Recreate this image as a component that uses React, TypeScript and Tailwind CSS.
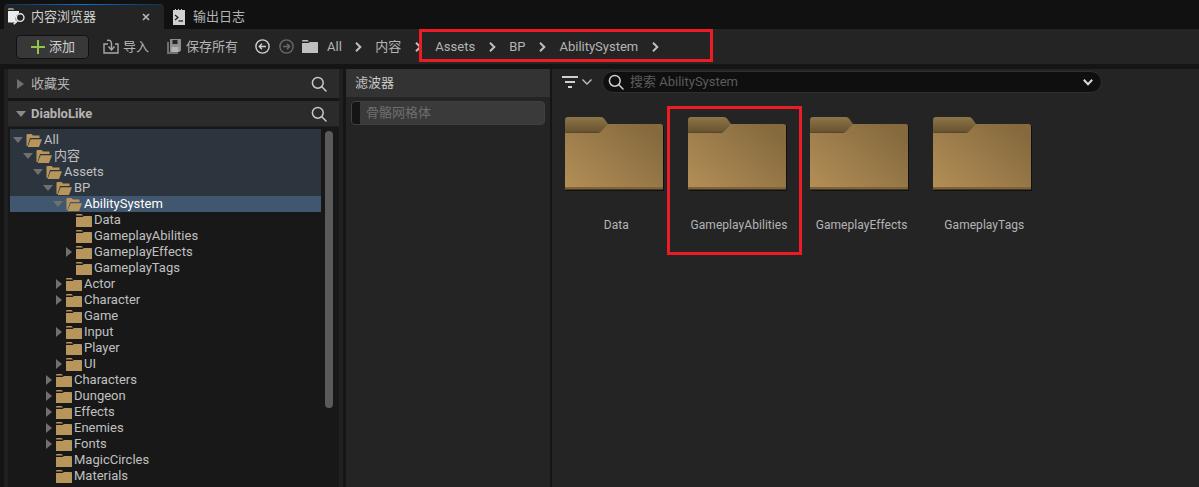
import React from "react";

const FONT = "font-['Roboto','Noto_Sans_CJK_SC',sans-serif]";

function Search({ className = "" }: { className?: string }) {
  return (
    <svg width="16" height="16" viewBox="0 0 16 16" fill="none" stroke="currentColor" strokeWidth="1.5" className={className}>
      <circle cx="6.8" cy="6.8" r="5.4" />
      <path d="M10.8 10.8 15 15" strokeLinecap="round" />
    </svg>
  );
}

function Chevron() {
  return (
    <svg width="7" height="10" viewBox="0 0 7 10" fill="none" stroke="#c0c0c0" strokeWidth="2" className="shrink-0">
      <path d="M1 0.8 5.3 5 1 9.2" />
    </svg>
  );
}

function ClosedFolder() {
  return (
    <svg width="16" height="13" viewBox="0 0 16 13" className="shrink-0">
      <path d="M0 1.2Q0 0 1 0H5.5L7 1.6H0Z" fill="#b8955a" />
      <path d="M0 3H6.5L8 2H15.2Q16 2 16 2.8V13H0Z" fill="#b8955a" />
    </svg>
  );
}

function OpenFolder() {
  return (
    <svg width="16" height="13" viewBox="0 0 16 13" className="shrink-0">
      <path d="M0.5 12V1Q0.5 0 1.5 0H5.5L7 1.6H13.5V4H4L1.5 12Z" fill="#b8955a" />
      <path d="M4.6 5.2H16L13 13H1.6Z" fill="#b8955a" />
    </svg>
  );
}

function TreeArrow({ kind }: { kind: "open" | "closed" | "none" }) {
  if (kind === "none") return <span className="w-[10px] shrink-0" />;
  if (kind === "open")
    return (
      <svg width="10" height="6" viewBox="0 0 10 6" className="shrink-0">
        <path d="M0 0H10L5 6Z" fill="#707070" />
      </svg>
    );
  return (
    <span className="w-[10px] shrink-0 flex justify-end pr-[1px]">
      <svg width="6" height="10" viewBox="0 0 6 10">
        <path d="M0 0 6 5 0 10Z" fill="#707070" />
      </svg>
    </span>
  );
}

type Row = { label: string; depth: number; arrow: "open" | "closed" | "none"; tint?: boolean; selected?: boolean };

const rows: Row[] = [
  { label: "All", depth: 0, arrow: "open", tint: true },
  { label: "内容", depth: 1, arrow: "open", tint: true },
  { label: "Assets", depth: 2, arrow: "open", tint: true },
  { label: "BP", depth: 3, arrow: "open", tint: true },
  { label: "AbilitySystem", depth: 4, arrow: "open", selected: true },
  { label: "Data", depth: 5, arrow: "none" },
  { label: "GameplayAbilities", depth: 5, arrow: "none" },
  { label: "GameplayEffects", depth: 5, arrow: "closed" },
  { label: "GameplayTags", depth: 5, arrow: "none" },
  { label: "Actor", depth: 4, arrow: "closed" },
  { label: "Character", depth: 4, arrow: "closed" },
  { label: "Game", depth: 4, arrow: "none" },
  { label: "Input", depth: 4, arrow: "closed" },
  { label: "Player", depth: 4, arrow: "none" },
  { label: "UI", depth: 4, arrow: "closed" },
  { label: "Characters", depth: 3, arrow: "closed" },
  { label: "Dungeon", depth: 3, arrow: "closed" },
  { label: "Effects", depth: 3, arrow: "closed" },
  { label: "Enemies", depth: 3, arrow: "closed" },
  { label: "Fonts", depth: 3, arrow: "closed" },
  { label: "MagicCircles", depth: 3, arrow: "none" },
  { label: "Materials", depth: 3, arrow: "none" },
];

function TreeRow({ row }: { row: Row }) {
  const open = row.arrow === "open";
  return (
    <div
      className={`h-[16px] flex items-center text-[13px] leading-[16px] ${
        row.selected ? "bg-[#41566f] text-white" : row.tint ? "bg-[#2c343d] text-[#c0c0c0]" : "text-[#c0c0c0]"
      }`}
      style={{ paddingLeft: 3 + row.depth * 10 }}
    >
      <TreeArrow kind={row.arrow} />
      <span className="w-[3px] shrink-0" />
      {open ? <OpenFolder /> : <ClosedFolder />}
      <span className="ml-[2px] whitespace-nowrap">{row.label}</span>
    </div>
  );
}

function BigFolder({ id }: { id: string }) {
  return (
    <svg width="102" height="78" viewBox="0 0 102 78" className="block">
      <defs>
        <linearGradient id={`body-${id}`} x1="0" y1="1" x2="1" y2="0.25">
          <stop offset="0" stopColor="#b48f57" />
          <stop offset="1" stopColor="#856a3e" />
        </linearGradient>
        <linearGradient id={`tab-${id}`} x1="0" y1="0" x2="0" y2="1">
          <stop offset="0" stopColor="#8f7549" />
          <stop offset="1" stopColor="#67532f" />
        </linearGradient>
      </defs>
      <path d="M2 10H100V75H2Z" fill="#111111" />
      <path d="M1 16V4Q1 1 4 1H37Q39 1 40 2.5L44 8V16Z" fill={`url(#tab-${id})`} />
      <path d="M1 16.5H34Q36 16.5 37 15.5L44 8H96.5Q99 8 99 10.5V73H1Z" fill={`url(#body-${id})`} />
      <path d="M1 71H99V73.5H1Z" fill="#7d6339" />
    </svg>
  );
}

function ContentItem({ id, label }: { id: string; label: string }) {
  return (
    <div className="w-[122.67px] shrink-0 flex flex-col items-center">
      <div className="w-full pl-[12px]">
        <BigFolder id={id} />
      </div>
      <div className="mt-[23px] pl-[6px] text-[12px] leading-[16px] tracking-[0.05px] text-[#b4b4b4] whitespace-nowrap">{label}</div>
    </div>
  );
}

export default function App() {
  return (
    <div className={`relative w-[1199px] h-[487px] overflow-hidden flex flex-col bg-[#151515] ${FONT}`}>
      {/* Tab bar */}
      <div className="h-[29px] shrink-0 flex items-end bg-[#111111] pl-[4px]">
        <div className="relative w-[160px] h-[25px] rounded-t-[4px] bg-[#242424] flex items-center pl-[4px] pr-[14px] text-[13px] text-[#d0d0d0]">
          <div className="absolute left-[2px] right-[2px] top-0 h-[1px] bg-gradient-to-r from-[#0a3460] via-[#0f6fd0] to-[#0a3460]" />
          <svg width="18" height="17" viewBox="0 0 18 17" className="shrink-0 -mt-[1px]">
            <path d="M0 1Q0 0 1 0H5L6.5 2H0Z" fill="#8c8c8c" />
            <path d="M0 3H11V5Q7.5 7 7.6 11Q7.7 13 9 14.5H0Z" fill="#ececec" />
            <circle cx="12.2" cy="9.6" r="3.8" fill="none" stroke="#e8e8e8" strokeWidth="1.4" />
            <path d="M9.4 12.6 5.8 16.2" stroke="#e8e8e8" strokeWidth="1.6" />
          </svg>
          <span className="ml-[5px]">内容浏览器</span>
          <svg width="8" height="8" viewBox="0 0 8 8" className="ml-auto" stroke="#b8b8b8" strokeWidth="1.6">
            <path d="M1 1 7 7M7 1 1 7" />
          </svg>
        </div>
        <div className="h-[25px] flex items-center pl-[9px] text-[13px] text-[#b4b4b4]">
          <svg width="12" height="16" viewBox="0 0 12 16" className="shrink-0">
            <path d="M0 1H2V0H3V1H5V0H6V1H8V0H9V1H12V16H0Z" fill="#d0d0d0" />
            <path d="M2 6 5 8.5 2 11" fill="none" stroke="#151515" strokeWidth="1.2" />
            <path d="M5.5 12H10" stroke="#151515" strokeWidth="1.2" />
          </svg>
          <span className="ml-[8px]">输出日志</span>
        </div>
      </div>

      {/* Toolbar */}
      <div className="h-[35px] shrink-0 bg-[#242424] flex items-center pl-[16px] text-[13px] text-[#b4b4b4] whitespace-nowrap">
        <button className="w-[73px] h-[24px] rounded-[4px] border border-[#111111] bg-[#383838] flex items-center pl-[14px] text-[#d0d0d0]">
          <svg width="14" height="14" viewBox="0 0 14 14" className="shrink-0" fill="#8fc64a">
            <path d="M6 0H8V6H14V8H8V14H6V8H0V6H6Z" />
          </svg>
          <span className="ml-[4px]">添加</span>
        </button>
        <svg width="16" height="15" viewBox="0 0 16 15" className="ml-[14px] shrink-0" fill="none" stroke="#a8a8a8" strokeWidth="1.4">
          <path d="M5 5H1V14H15V5H12" />
          <path d="M4 1.5C7 0.5 8.5 2 8.5 5V10" />
          <path d="M5.5 7.5 8.5 11 11.5 7.5" />
        </svg>
        <span className="ml-[4px]">导入</span>
        <svg width="14" height="15" viewBox="0 0 14 15" className="ml-[18px] shrink-0">
          <path d="M3 0H14V11.5L12.5 13H3Z" fill="#8e8e8e" />
          <path d="M0 3H2V13H11V15H0Z" fill="#6e6e6e" />
          <path d="M5.5 1H10.5V5H5.5Z" fill="#242424" />
          <path d="M4.5 8H11.5V13H4.5Z" fill="#b4b4b4" />
        </svg>
        <span className="ml-[5px]">保存所有</span>
        <svg width="15" height="15" viewBox="0 0 15 15" className="ml-[17px] shrink-0" fill="none" stroke="#d0d0d0" strokeWidth="1.4">
          <circle cx="7.5" cy="7.5" r="6.6" />
          <path d="M11 7.5H4.5M7 4.8 4.3 7.5 7 10.2" />
        </svg>
        <svg width="15" height="15" viewBox="0 0 15 15" className="ml-[9px] shrink-0" fill="none" stroke="#6a6a6a" strokeWidth="1.4">
          <circle cx="7.5" cy="7.5" r="6.6" />
          <path d="M4 7.5H10.5M8 4.8 10.7 7.5 8 10.2" />
        </svg>
        <svg width="16" height="13" viewBox="0 0 16 13" className="ml-[8px] shrink-0" fill="#c0c0c0">
          <path d="M0 1.2Q0 0 1 0H5.5L7 1.6H0Z" />
          <path d="M0 3H6.5L8 2H15.2Q16 2 16 2.8V13H0Z" />
        </svg>
        <span className="ml-[9px] mr-[13px]">All</span>
        <div className="flex items-center gap-[13.5px]">
          <Chevron />
          <span>内容</span>
          <Chevron />
          <span>Assets</span>
          <Chevron />
          <span>BP</span>
          <Chevron />
          <span>AbilitySystem</span>
          <Chevron />
        </div>
      </div>

      {/* Main */}
      <div className="flex-1 min-h-0 flex pt-[5px] pl-[4px]">
        {/* Left column */}
        <div className="w-[339px] shrink-0 flex flex-col bg-[#202020] px-[4px]">
          <div className="h-[29px] shrink-0 bg-[#2b2b2b] flex items-center pl-[9px] pr-[12px] text-[13px] text-[#b4b4b4]">
            <svg width="7" height="10" viewBox="0 0 7 10" className="shrink-0">
              <path d="M0 0 7 5 0 10Z" fill="#707070" />
            </svg>
            <span className="ml-[7px]">收藏夹</span>
            <Search className="ml-auto text-[#c8c8c8]" />
          </div>
          <div className="h-[3px] shrink-0 bg-[#151515]" />
          <div className="h-[25px] shrink-0 bg-[#2b2b2b] flex items-center pt-[1px] pl-[8px] pr-[12px] text-[13px] font-bold text-[#b4b4b4]">
            <svg width="10" height="6" viewBox="0 0 10 6" className="shrink-0">
              <path d="M0 0H10L5 6Z" fill="#8a8a8a" />
            </svg>
            <span className="ml-[5px]">DiabloLike</span>
            <Search className="ml-auto text-[#c8c8c8]" />
          </div>
          <div className="flex-1 min-h-0 mt-[1px] bg-[#181818] flex overflow-hidden">
            <div className="flex-1 min-w-0 ml-[2px] mr-[18px] mt-[2px] pt-[3px] overflow-hidden relative">
              <div className="absolute left-0 right-0 top-0 h-[3px] bg-[#2c343d]" />
              {rows.map((r) => (
                <TreeRow key={r.label} row={r} />
              ))}
            </div>
          </div>
        </div>
        {/* Scrollbar overlay */}
        <div className="absolute left-[325px] top-[131px] w-[8px] h-[277px] rounded-full bg-[#5a5a5a]" />

        {/* Middle */}
        <div className="w-[204px] ml-[3px] shrink-0 bg-[#242424] flex flex-col">
          <div className="h-[28px] shrink-0 bg-[#333333] flex items-center pl-[9px] text-[13px] text-[#c8c8c8]">滤波器</div>
          <div className="h-[24px] mt-[4px] mx-[5px] rounded-[4px] border border-[#3f3f3f] bg-[#3a3a3a] flex overflow-hidden">
            <span className="w-[8px] bg-[#151515] shrink-0" />
            <span className="ml-[6px] text-[13px] leading-[22px] text-[#6e6e6e]">骨骼网格体</span>
          </div>
        </div>

        {/* Content */}
        <div className="flex-1 min-w-0 ml-[2px] bg-[#242424] flex flex-col">
          <div className="h-[26px] shrink-0 flex items-center pl-[10px] pr-[97px]">
            <svg width="16" height="14" viewBox="0 0 16 14" className="shrink-0" stroke="#d0d0d0" strokeWidth="2" fill="none">
              <path d="M0 2H16M3 7H13M6 12H10" />
            </svg>
            <svg width="10" height="6" viewBox="0 0 10 6" className="ml-[4px] shrink-0" stroke="#c0c0c0" strokeWidth="1.4" fill="none">
              <path d="M0.5 0.5 5 5 9.5 0.5" />
            </svg>
            <div className="ml-[10px] flex-1 h-[22px] rounded-full bg-[#0f0f0f] border border-[#2f2f2f] flex items-center pl-[5px] pr-[8px]">
              <Search className="text-[#d0d0d0]" />
              <span className="ml-[6px] text-[13px] text-[#5c5c5c]">搜索 AbilitySystem</span>
              <svg width="10" height="7" viewBox="0 0 10 7" className="ml-auto" stroke="#d8d8d8" strokeWidth="2" fill="none">
                <path d="M0.8 0.8 5 5.2 9.2 0.8" />
              </svg>
            </div>
          </div>
          <div className="flex pt-[21px]">
            <ContentItem id="a" label="Data" />
            <ContentItem id="b" label="GameplayAbilities" />
            <ContentItem id="c" label="GameplayEffects" />
            <ContentItem id="d" label="GameplayTags" />
          </div>
        </div>
      </div>

      {/* Annotation boxes */}
      <div className="absolute left-[419px] top-[29px] w-[294px] h-[33px] border-[3px] border-[#ed1c24]" />
      <div className="absolute left-[667px] top-[106px] w-[135px] h-[149px] border-[3px] border-[#ed1c24]" />
    </div>
  );
}
